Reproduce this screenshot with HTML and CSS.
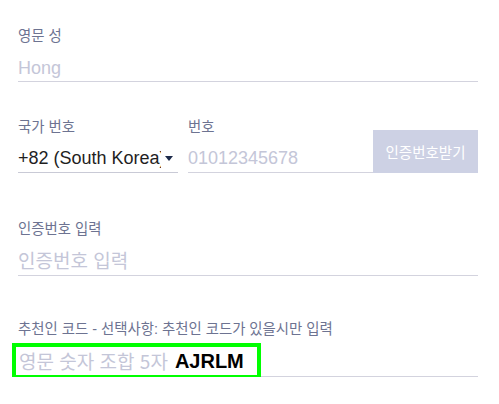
FILE: index.html
```html
<!DOCTYPE html>
<html lang="ko">
<head>
<meta charset="utf-8">
<title>Form</title>
<link rel="stylesheet" href="styles.css">
</head>
<body>
<div class="form">
  <div class="field f1">
    <div class="label">영문 성</div>
    <div class="input placeholder">Hong</div>
  </div>

  <div class="phone-row f2">
    <div class="field country">
      <div class="label">국가 번호</div>
      <div class="input select">
        <span class="select-text">+82 (South Korea)</span>
        <span class="caret"></span>
      </div>
    </div>
    <div class="field number">
      <div class="label">번호</div>
      <div class="input placeholder">01012345678</div>
    </div>
    <button class="btn" type="button">인증번호받기</button>
  </div>

  <div class="field f3">
    <div class="label">인증번호 입력</div>
    <div class="input placeholder ko">인증번호 입력</div>
  </div>

  <div class="field f4">
    <div class="label">추천인 코드 - 선택사항: 추천인 코드가 있을시만 입력</div>
    <div class="input ref-row">
      <span class="highlight"><span class="placeholder ko">영문 숫자 조합 5자</span><b class="code">AJRLM</b></span>
    </div>
  </div>
</div>
</body>
</html>
```

FILE: styles.css
```css
html, body {
  margin: 0;
  padding: 0;
  background: #ffffff;
}
body {
  font-family: "Liberation Sans", "Noto Sans CJK KR", Arial, sans-serif;
  color: #222;
}
.form {
  display: flex;
  flex-direction: column;
  padding: 0 21px 0 18px;
}
.label {
  font-family: "Liberation Sans", "Noto Sans CJK KR", sans-serif;
  font-size: 14.4px;
  line-height: 16px;
  color: #6d7391;
  white-space: nowrap;
}
.input {
  font-size: 18px;
  line-height: 20px;
  border-bottom: 1px solid #d3d3de;
}
.placeholder {
  color: #c4c6d8;
}
.f1 { margin-top: 28px; }
.f1 .input { padding: 14px 0 3px; }

.phone-row {
  display: flex;
  align-items: flex-end;
  margin-top: 37px;
}
.country { width: 160px; margin-right: 10px; }
.number { flex: 1; }
.phone-row .input { padding: 13px 0 4px; }
.select {
  display: flex;
  align-items: center;
  color: #1f1f1f;
  border-bottom-color: #c9cad6;
}
.select-text {
  flex: 0 0 143px;
  overflow: hidden;
  white-space: nowrap;
}
.caret {
  width: 0;
  height: 0;
  margin-left: 4px;
  border-left: 4px solid transparent;
  border-right: 4px solid transparent;
  border-top: 5px solid #1c2a4a;
}
.btn {
  width: 105px;
  height: 43px;
  border: 0;
  margin: 0;
  padding: 0;
  background: #cdd1e4;
  color: #ffffff;
  font-family: "Noto Sans CJK KR", sans-serif;
  font-size: 14.5px;
}

.f3 { margin-top: 48px; }
.f3 .input { padding: 13px 0 5px; font-size: 19px; }

.f4 { margin-top: 45px; }
.ref-row {
  display: flex;
  height: 28px;
  padding-top: 11px;
  box-sizing: content-box;
}
.highlight {
  position: relative;
  display: flex;
  align-items: center;
  box-sizing: border-box;
  width: 249px;
  height: 36px;
  margin: -5px 0 -3px -6px;
  padding-left: 3px;
  border: 4px solid #00ff00;
  background: #fff;
  white-space: nowrap;
  font-size: 19px;
}
.ko {
  font-family: "Noto Sans CJK KR", sans-serif;
}
.code {
  margin-left: 7px;
  color: #000;
  font-family: "Liberation Sans", Arial, sans-serif;
  font-weight: 700;
  font-size: 20px;
}
```
